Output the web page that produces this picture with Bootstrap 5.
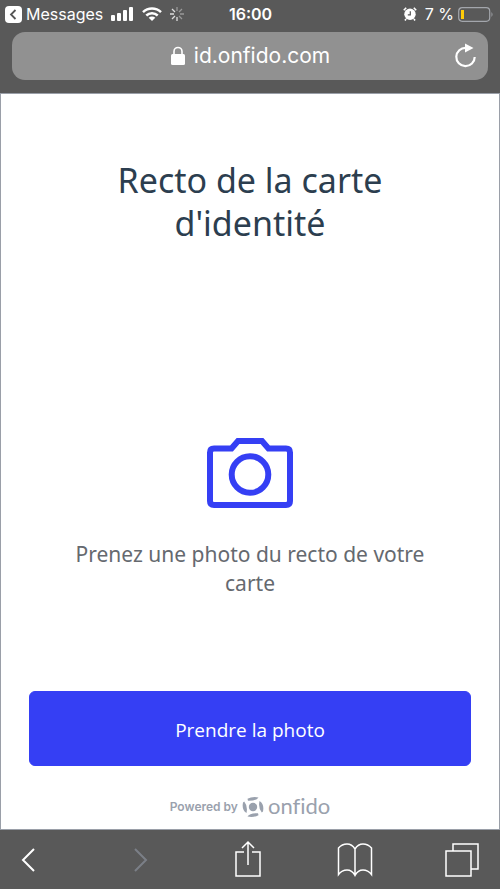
<!DOCTYPE html>
<html lang="fr">
<head>
<meta charset="utf-8">
<meta name="viewport" content="width=device-width, initial-scale=1">
<title>Recto de la carte d'identité</title>
<link href="https://cdn.jsdelivr.net/npm/bootstrap@5.3.0/dist/css/bootstrap.min.css" rel="stylesheet">
<style>
  body { font-family: "Noto Sans", "Open Sans", sans-serif; }
  .chrome { background: #595959; color: #fff; font-family: Inter, "Liberation Sans", sans-serif; }
  .chrome button { color: inherit; line-height: 1; }
  .chrome svg, main svg { display: block; flex: none; }
  .status { font-size: 16px; line-height: 20px; padding: 4px 6px 8px 5px; }
  .status-side { flex: 1 1 0; }
  .clock { padding-left: 2px; }
  .address { background: #919191; border-radius: 13px; height: 48px; margin: 0 12px 13px; }
  .url { font-size: 21px; line-height: 28px; color: #fff; }
  .url:hover { color: #fff; }
  .reload { right: 10px; top: 9px; }
  .screen { border: 1px solid #9a9fa8; padding: 65px 28px 9px; }
  .title { color: #2c3e4f; font-size: 34px; line-height: 43px; font-weight: 400; max-width: 300px; }
  .step { padding-top: 100px; }
  .prompt { color: #65696f; font-size: 21px; line-height: 29px; max-width: 380px; margin-top: 32px; }
  .shoot { --bs-btn-bg: #353ff4; --bs-btn-border-color: #353ff4; --bs-btn-hover-bg: #2c35d8; --bs-btn-color: #fff; --bs-btn-hover-color: #fff;
    height: 75px; font-size: 19px; font-family: "Open Sans", sans-serif; border-radius: 6px; margin-bottom: 28px; padding-top: 9px; }
  .powered { color: #9aa1ad; font: 600 12px/26px Inter, "Liberation Sans", sans-serif; }
  .wordmark { font: 400 22px/24px Lato, sans-serif; font-variant-ligatures: none; padding-bottom: 2px; }
  .tools { padding: 10px 20px 9px; }
  .tools button { width: 36px; }
  .tools .back { width: 32px; }
</style>
</head>
<body class="d-flex flex-column min-vh-100">
<header class="chrome">
  <div class="status d-flex align-items-center">
    <div class="status-side d-flex align-items-center">
      <button type="button" class="border-0 bg-transparent p-0 d-flex align-items-center gap-1">
        <svg width="17" height="17" viewBox="0 0 17 17" aria-hidden="true"><rect width="17" height="17" rx="4" fill="#fff"/><path d="M10.500 4 6 8.500l4.500 4.500" fill="none" stroke="#555" stroke-width="1.800"/></svg>
        <span>Messages</span>
      </button>
      <svg class="ms-2" width="23" height="14" viewBox="0 0 23 14" fill="#fff" aria-hidden="true"><rect y="8" width="4" height="6" rx="1"/><rect x="6" y="6" width="4" height="8" rx="1"/><rect x="12" y="3" width="4" height="11" rx="1"/><rect x="18" width="4" height="14" rx="1"/></svg>
      <svg class="ms-2" width="20" height="14" viewBox="0 0 20 14" fill="none" stroke="#fff" stroke-width="2.500" aria-hidden="true"><path d="M1 5.200a13 13 0 0 1 18 0M4.300 8.500a8.200 8.200 0 0 1 11.400 0"/><path d="M6.700 10.800a4.700 4.700 0 0 1 6.600 0L10 14z" fill="#fff" stroke="none"/></svg>
      <svg class="ms-2" width="14" height="14" viewBox="0 0 14 14" stroke="#ddd" stroke-width="1.300" aria-hidden="true"><path d="M0 7h4M2 2l3 3M2 12l3-3M7 10v4"/><path d="M7 0v4M12 2 9 5M10 7h4M9 9l3 3" stroke="#999"/></svg>
    </div>
    <span class="clock fw-semibold">16:00</span>
    <div class="status-side d-flex align-items-center justify-content-end">
      <svg class="me-2" width="14" height="14" viewBox="0 0 14 14" aria-hidden="true"><circle cx="7" cy="7.300" r="5.700" fill="#fff"/><path d="M.8 3.200 3.200.8M10.800.8l2.400 2.400M3 12l-1 1.500M11 12l1 1.500" stroke="#fff" stroke-width="1.600"/><path d="M7.300 4.300v3.500H4.800" fill="none" stroke="#555" stroke-width="1.200"/></svg>
      <span class="me-1">7 %</span>
      <svg width="36" height="15" viewBox="0 0 36 15" aria-hidden="true"><rect x=".7" y=".7" width="31" height="13.600" rx="3.500" fill="none" stroke="#a3a6ac" stroke-width="1.200"/><rect x="3" y="3" width="3" height="9" fill="#fecb08"/><path d="M33.500 5q2 2.500 0 5z" fill="#a3a6ac"/></svg>
    </div>
  </div>
  <div class="address position-relative d-flex align-items-center justify-content-center">
    <svg class="me-2" width="16" height="20" viewBox="0 0 16 20" aria-hidden="true"><rect x="1" y="8" width="14" height="11" rx="1.500" fill="#fff"/><path d="M4 9V5.500a4 4 0 0 1 8 0V9" fill="none" stroke="#fff" stroke-width="1.600"/></svg>
    <a class="url text-decoration-none" href="#">id.onfido.com</a>
    <button type="button" class="reload position-absolute border-0 bg-transparent p-0" aria-label="Recharger">
      <svg width="24" height="28" viewBox="0 0 24 28" aria-hidden="true"><path d="M12 6.800A9.200 9.200 0 1 0 20.700 16" fill="none" stroke="#fff" stroke-width="2.200"/><path d="m11 2.500 8.500 4.400-8.500 4.600z" fill="#fff"/></svg>
    </button>
  </div>
</header>

<main class="screen flex-grow-1 d-flex flex-column text-center bg-white">
  <h1 class="title mx-auto mb-0">Recto de la carte d'identité</h1>
  <section class="step my-auto">
    <svg class="mx-auto" width="86" height="70" viewBox="0 0 86 70" fill="none" stroke="#353ff4" stroke-width="6" aria-hidden="true"><path d="M7 10.500h17.500L31 3h24l6.500 7.500H79q4 0 4 4V63q0 4-4 4H7q-4 0-4-4V14.500q0-4 4-4z"/><circle cx="43" cy="36.500" r="18.300"/></svg>
    <p class="prompt mx-auto mb-0">Prenez une photo du recto de votre carte</p>
  </section>
  <button type="button" class="btn shoot w-100">Prendre la photo</button>
  <div class="powered d-flex align-items-center justify-content-center">
    <span>Powered by</span>
    <svg class="mx-1" width="22" height="22" viewBox="0 0 22 22" fill="currentColor" aria-hidden="true"><circle cx="11" cy="11" r="4.200"/><path d="M5.500 2.800Q10 .3 16.500 1.400 14.500 5 6 4.800zM16.500 19.200Q12 21.700 5.500 20.600 7.500 17 16 17.200zM2.200 5.500Q6 10 4.500 17-.5 14 1 6.500zM19.800 16.500Q16 12 17.500 5q5 3 3.500 10.500z"/></svg>
    <span class="wordmark">onfido</span>
  </div>
</main>

<nav class="chrome tools d-flex justify-content-between align-items-center" aria-label="Navigation">
  <button type="button" class="back border-0 bg-transparent p-0" aria-label="Précédent"><svg width="16" height="26" viewBox="0 0 16 26" fill="none" stroke="#fff" stroke-width="2"><path d="M14 2 3 13l11 11"/></svg></button>
  <button type="button" class="border-0 bg-transparent p-0" aria-label="Suivant" disabled><svg class="mx-auto" width="16" height="26" viewBox="0 0 16 26" fill="none" stroke="#7b7f87" stroke-width="2"><path d="m2 2 11 11L2 24"/></svg></button>
  <button type="button" class="border-0 bg-transparent p-0" aria-label="Partager"><svg class="mx-auto" width="28" height="40" viewBox="0 0 28 40" fill="none" stroke="#fff" stroke-width="1.500"><path d="M10 12H2v24h24V12h-8M14 25V3M8 8l6-6 6 6"/></svg></button>
  <button type="button" class="border-0 bg-transparent p-0" aria-label="Signets"><svg class="mx-auto" width="36" height="34" viewBox="0 0 36 34" fill="none" stroke="#fff" stroke-width="1.500"><path d="M18 6Q15 1 10 1T1.500 5v26.500Q5 27 10 27t8 5.500Q21 27 26 27t8.500 4.500V5Q31 1 26 1t-8 5zv26"/></svg></button>
  <button type="button" class="border-0 bg-transparent p-0" aria-label="Onglets"><svg class="mx-auto" width="34" height="34" viewBox="0 0 34 34" fill="none" stroke="#fff" stroke-width="1.500"><path d="M1 8h25v25H1zM8 8V1h25v25h-7"/></svg></button>
</nav>
<script src="https://cdn.jsdelivr.net/npm/bootstrap@5.3.0/dist/js/bootstrap.bundle.min.js"></script>
</body>
</html>
